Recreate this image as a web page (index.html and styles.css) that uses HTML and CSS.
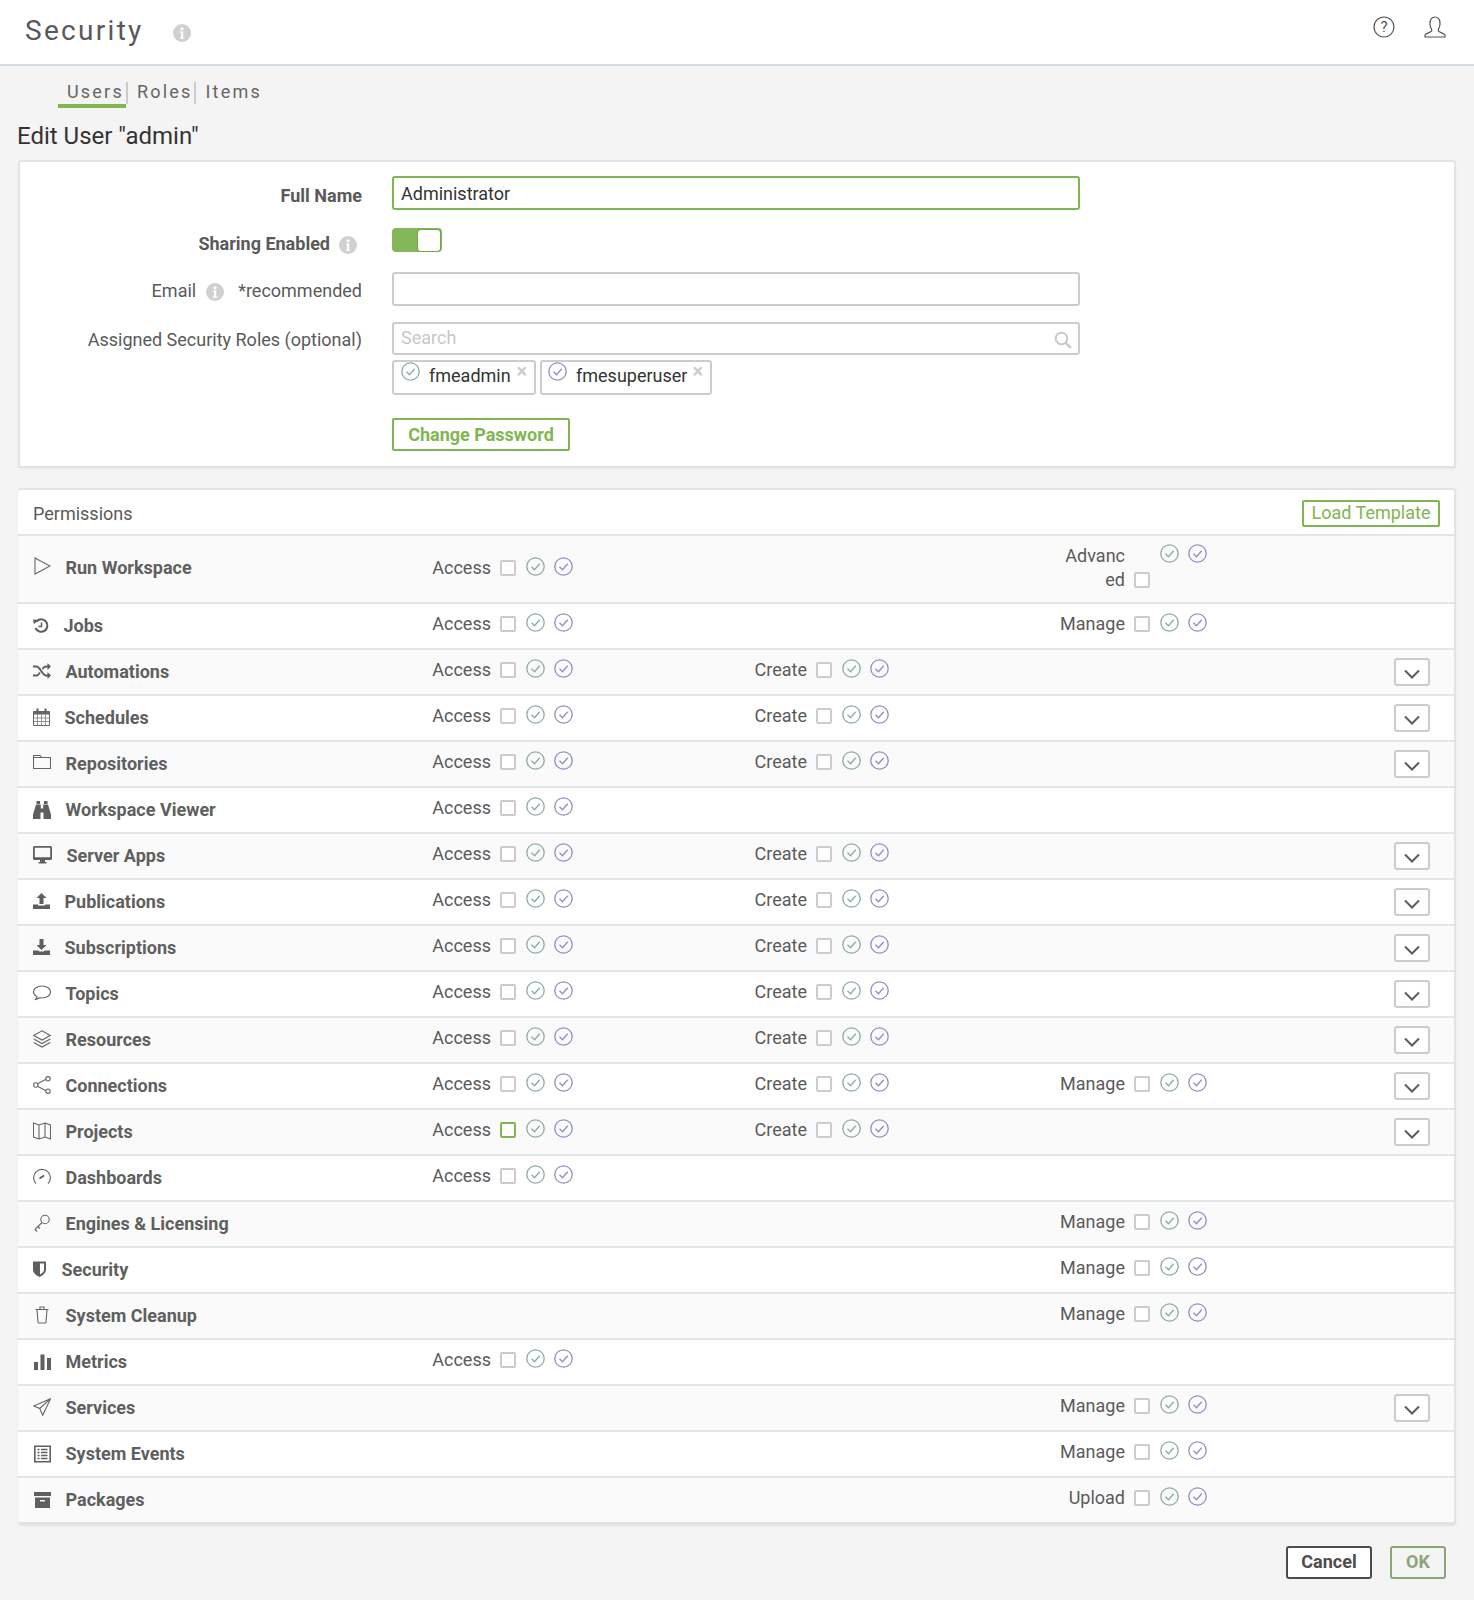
FILE: index.html
```html
<!DOCTYPE html>
<html lang="en">
<head>
<meta charset="utf-8">
<title>Security</title>
<link rel="stylesheet" href="styles.css">
</head>
<body>
<svg class="defs" width="0" height="0" aria-hidden="true">
  <symbol id="chk" viewBox="0 0 19 19"><circle cx="9.5" cy="9.5" r="8.7" fill="none" stroke="currentColor" stroke-width="1.3"/><path d="M5.5 9.8l3 3 5.2-6" fill="none" stroke="currentColor" stroke-width="1.3"/></symbol>
  <symbol id="info" viewBox="0 0 18 18"><circle cx="9" cy="9" r="9" fill="#d0d0d0"/><circle cx="9" cy="4.8" r="1.6" fill="#fff"/><path d="M6.8 7.4h3.4v6h1.2v1.4H6.8v-1.4H8V8.8H6.8z" fill="#fff"/></symbol>
  <symbol id="chev" viewBox="0 0 16 10"><path d="M1 1.5l7 7 7-7" fill="none" stroke="#5c5c5c" stroke-width="2"/></symbol>
</svg>

<header class="topbar">
  <div class="title-wrap">
    <h1 class="title">Security</h1>
    <svg class="info-top" width="18" height="18"><use href="#info"/></svg>
  </div>
  <div class="top-icons">
    <svg width="22" height="22" viewBox="0 0 22 22"><circle cx="11" cy="11" r="10" fill="none" stroke="#555" stroke-width="1.2"/><text x="11" y="16" text-anchor="middle" class="q">?</text></svg>
    <svg width="22" height="22" viewBox="0 0 22 22"><path d="M1 21h20v-1.8c0-1.6-5.6-2.6-6.6-4-.6-.9-.2-1.6.4-2.6.9-1.4 1.2-3 1.2-5C16 3.400 14 1 11 1S6 3.400 6 7.600c0 2 .3 3.600 1.200 5 .6 1 1 1.700.4 2.600-1 1.400-6.600 2.400-6.600 4z" fill="none" stroke="#555" stroke-width="1.200"/></svg>
  </div>
</header>

<nav class="tabs">
  <a class="tab tab-active">Users</a>
  <a class="tab">Roles</a>
  <a class="tab tab-last">Items</a>
</nav>

<h2 class="page-title">Edit User "admin"</h2>

<section class="card form">
  <div class="f-row f-r1">
    <label class="f-label strong">Full Name</label>
    <input class="inp inp-focus" type="text" value="Administrator">
  </div>
  <div class="f-row f-r2">
    <label class="f-label strong">Sharing Enabled<svg class="info-s" width="18" height="18"><use href="#info"/></svg></label>
    <div class="toggle"><span class="knob"></span></div>
  </div>
  <div class="f-row f-r3">
    <label class="f-label">Email<svg class="info-s info-e" width="18" height="18"><use href="#info"/></svg>*recommended</label>
    <input class="inp" type="text">
  </div>
  <div class="f-row f-r4">
    <label class="f-label">Assigned Security Roles (optional)</label>
    <div class="search">
      <span class="ph">Search</span>
      <svg width="18" height="18" viewBox="0 0 18 18"><circle cx="7.500" cy="7.500" r="5.800" fill="none" stroke="#c9c9c9" stroke-width="2"/><path d="M11.800 11.800l5 5" stroke="#c9c9c9" stroke-width="2.500"/></svg>
    </div>
  </div>
  <div class="chips">
    <span class="chip chip-a"><svg class="chip-i g"><use href="#chk"/></svg><span class="chip-t">fmeadmin</span><span class="chip-x">×</span></span>
    <span class="chip chip-b"><svg class="chip-i p"><use href="#chk"/></svg><span class="chip-t">fmesuperuser</span><span class="chip-x">×</span></span>
  </div>
  <button class="btn-pw" type="button">Change Password</button>
</section>

<section class="card perms">
  <div class="p-head"><span class="p-title">Permissions</span><button class="btn-load" type="button">Load Template</button></div>

  <div class="row row-first">
    <div class="name"><svg width="17" height="18" viewBox="0 0 17 18"><path d="M1 1l15 8-15 8z" fill="none" stroke="#666" stroke-width="1.100"/></svg><span>Run Workspace</span></div>
    <div class="perm"><span class="lab">Access</span><span class="box"></span><svg class="chk g"><use href="#chk"/></svg><svg class="chk p"><use href="#chk"/></svg></div>
    <div></div>
    <div class="perm perm-wrap"><span class="lab">Advanced</span><span class="box"></span><svg class="chk g"><use href="#chk"/></svg><svg class="chk p"><use href="#chk"/></svg></div>
  </div>

  <div class="row">
    <div class="name name-f"><svg width="16" height="18" viewBox="0 0 16 18"><path d="M3.500 4.500A6.200 6.200 0 1 1 2.500 11" fill="none" stroke="#5f5f5f" stroke-width="2"/><path d="M0 2.500l6 .5-5 4z" fill="#5f5f5f"/><path d="M8.500 5.500v4h-3" fill="none" stroke="#5f5f5f" stroke-width="1.500"/></svg><span>Jobs</span></div>
    <div class="perm"><span class="lab">Access</span><span class="box"></span><svg class="chk g"><use href="#chk"/></svg><svg class="chk p"><use href="#chk"/></svg></div>
    <div></div>
    <div class="perm"><span class="lab">Manage</span><span class="box"></span><svg class="chk g"><use href="#chk"/></svg><svg class="chk p"><use href="#chk"/></svg></div>
  </div>

  <div class="row">
    <div class="name"><svg width="18" height="18" viewBox="0 0 18 18"><path d="M0 4.500h3.500c3.500 0 6 9 9.500 9h2.500M0 13.500h3.500c1.500 0 2.500-1.500 3.500-3M9.500 7c1-1.500 2-2.500 3.500-2.500h2.500" fill="none" stroke="#5f5f5f" stroke-width="2"/><path d="M14.500 1l3.500 3.500-3.500 3.500zM14.500 10l3.500 3.500-3.500 3.500z" fill="#5f5f5f"/></svg><span>Automations</span></div>
    <div class="perm"><span class="lab">Access</span><span class="box"></span><svg class="chk g"><use href="#chk"/></svg><svg class="chk p"><use href="#chk"/></svg></div>
    <div class="perm"><span class="lab">Create</span><span class="box"></span><svg class="chk g"><use href="#chk"/></svg><svg class="chk p"><use href="#chk"/></svg></div>
    <div></div>
    <button class="more" type="button"><svg width="16" height="10"><use href="#chev"/></svg></button>
  </div>

  <div class="row">
    <div class="name"><svg width="17" height="18" viewBox="0 0 17 18"><path d="M.5 3.500h16v14H.5z" fill="none" stroke="#666"/><path d="M.5 3.500h16v3H.5z" fill="#666"/><path d="M.5 10h16M.5 13.500h16M4.500 6v11M8.500 6v11M12.500 6v11" stroke="#888" stroke-width=".9"/><path d="M4.500 .5v4M12.500 .5v4" stroke="#5f5f5f" stroke-width="2"/></svg><span>Schedules</span></div>
    <div class="perm"><span class="lab">Access</span><span class="box"></span><svg class="chk g"><use href="#chk"/></svg><svg class="chk p"><use href="#chk"/></svg></div>
    <div class="perm"><span class="lab">Create</span><span class="box"></span><svg class="chk g"><use href="#chk"/></svg><svg class="chk p"><use href="#chk"/></svg></div>
    <div></div>
    <button class="more" type="button"><svg width="16" height="10"><use href="#chev"/></svg></button>
  </div>

  <div class="row">
    <div class="name"><svg width="18" height="18" viewBox="0 0 18 18"><path d="M.5 1.500h6.500l1.500 2h9v11H.5z M.5 3.500H8.500" fill="none" stroke="#666" stroke-width="1.100"/></svg><span>Repositories</span></div>
    <div class="perm"><span class="lab">Access</span><span class="box"></span><svg class="chk g"><use href="#chk"/></svg><svg class="chk p"><use href="#chk"/></svg></div>
    <div class="perm"><span class="lab">Create</span><span class="box"></span><svg class="chk g"><use href="#chk"/></svg><svg class="chk p"><use href="#chk"/></svg></div>
    <div></div>
    <button class="more" type="button"><svg width="16" height="10"><use href="#chev"/></svg></button>
  </div>

  <div class="row">
    <div class="name name-f"><svg width="18" height="18" viewBox="0 0 18 18"><path d="M3.500 0h3.500v3H3.500zM11 0h3.500v3H11zM3 3.500h4.800v4h2.400v-4H15l3 10v4.500h-7.500v-6.500H7.500V18H0v-4.500z" fill="#5f5f5f"/></svg><span>Workspace Viewer</span></div>
    <div class="perm"><span class="lab">Access</span><span class="box"></span><svg class="chk g"><use href="#chk"/></svg><svg class="chk p"><use href="#chk"/></svg></div>
    <div></div>
    <div></div>
  </div>

  <div class="row">
    <div class="name"><svg width="19" height="18" viewBox="0 0 19 18"><path d="M1.500 0h16A1.500 1.500 0 0 1 19 1.500v11a1.500 1.500 0 0 1-1.500 1.500h-5.500v2h1.500v1.500h-8V16H7v-2H1.500A1.500 1.500 0 0 1 0 12.500v-11A1.500 1.500 0 0 1 1.500 0zM1.800 1.800v9.400h15.400V1.800z" fill="#5f5f5f" fill-rule="evenodd"/></svg><span>Server Apps</span></div>
    <div class="perm"><span class="lab">Access</span><span class="box"></span><svg class="chk g"><use href="#chk"/></svg><svg class="chk p"><use href="#chk"/></svg></div>
    <div class="perm"><span class="lab">Create</span><span class="box"></span><svg class="chk g"><use href="#chk"/></svg><svg class="chk p"><use href="#chk"/></svg></div>
    <div></div>
    <button class="more" type="button"><svg width="16" height="10"><use href="#chev"/></svg></button>
  </div>

  <div class="row">
    <div class="name"><svg width="17" height="18" viewBox="0 0 17 18"><path d="M8.500 1l5 5h-3v6h-4V6h-3z" fill="#5f5f5f"/><path d="M0 12.500h5v1h7v-1h5V17H0z" fill="#5f5f5f"/></svg><span>Publications</span></div>
    <div class="perm"><span class="lab">Access</span><span class="box"></span><svg class="chk g"><use href="#chk"/></svg><svg class="chk p"><use href="#chk"/></svg></div>
    <div class="perm"><span class="lab">Create</span><span class="box"></span><svg class="chk g"><use href="#chk"/></svg><svg class="chk p"><use href="#chk"/></svg></div>
    <div></div>
    <button class="more" type="button"><svg width="16" height="10"><use href="#chev"/></svg></button>
  </div>

  <div class="row">
    <div class="name"><svg width="17" height="18" viewBox="0 0 17 18"><path d="M6.500 1h4v6h3l-5 5-5-5h3z" fill="#5f5f5f"/><path d="M0 12.500h5l1.500 1h4l1.500-1h5V17H0z" fill="#5f5f5f"/></svg><span>Subscriptions</span></div>
    <div class="perm"><span class="lab">Access</span><span class="box"></span><svg class="chk g"><use href="#chk"/></svg><svg class="chk p"><use href="#chk"/></svg></div>
    <div class="perm"><span class="lab">Create</span><span class="box"></span><svg class="chk g"><use href="#chk"/></svg><svg class="chk p"><use href="#chk"/></svg></div>
    <div></div>
    <button class="more" type="button"><svg width="16" height="10"><use href="#chev"/></svg></button>
  </div>

  <div class="row">
    <div class="name"><svg width="18" height="18" viewBox="0 0 18 18"><path d="M9 2c4.700 0 8.500 2.500 8.500 6s-3.800 6-8.500 6c-1 0-1.800-.1-2.600-.3-1 .8-2.200 1.500-3.900 1.800.8-.8 1.300-1.700 1.500-2.800C1.800 11.600.5 10 .5 8 .5 4.500 4.300 2 9 2z" fill="none" stroke="#666" stroke-width="1.100"/></svg><span>Topics</span></div>
    <div class="perm"><span class="lab">Access</span><span class="box"></span><svg class="chk g"><use href="#chk"/></svg><svg class="chk p"><use href="#chk"/></svg></div>
    <div class="perm"><span class="lab">Create</span><span class="box"></span><svg class="chk g"><use href="#chk"/></svg><svg class="chk p"><use href="#chk"/></svg></div>
    <div></div>
    <button class="more" type="button"><svg width="16" height="10"><use href="#chev"/></svg></button>
  </div>

  <div class="row">
    <div class="name"><svg width="18" height="18" viewBox="0 0 18 18"><path d="M9 .8l8.300 4.600L9 10 .7 5.400z" fill="none" stroke="#666" stroke-width="1.100"/><path d="M.7 9L9 13.600 17.300 9M.7 12.400L9 17l8.300-4.600" fill="none" stroke="#666" stroke-width="1.100"/></svg><span>Resources</span></div>
    <div class="perm"><span class="lab">Access</span><span class="box"></span><svg class="chk g"><use href="#chk"/></svg><svg class="chk p"><use href="#chk"/></svg></div>
    <div class="perm"><span class="lab">Create</span><span class="box"></span><svg class="chk g"><use href="#chk"/></svg><svg class="chk p"><use href="#chk"/></svg></div>
    <div></div>
    <button class="more" type="button"><svg width="16" height="10"><use href="#chev"/></svg></button>
  </div>

  <div class="row">
    <div class="name"><svg width="18" height="18" viewBox="0 0 18 18"><path d="M4.500 7.800L13 3.200M4.500 10.200L13 14.800" stroke="#666" stroke-width="1.100"/><circle cx="2.800" cy="9" r="2.200" fill="none" stroke="#666" stroke-width="1.100"/><circle cx="15" cy="2.800" r="2.200" fill="none" stroke="#666" stroke-width="1.100"/><circle cx="15" cy="15.200" r="2.200" fill="none" stroke="#666" stroke-width="1.100"/></svg><span>Connections</span></div>
    <div class="perm"><span class="lab">Access</span><span class="box"></span><svg class="chk g"><use href="#chk"/></svg><svg class="chk p"><use href="#chk"/></svg></div>
    <div class="perm"><span class="lab">Create</span><span class="box"></span><svg class="chk g"><use href="#chk"/></svg><svg class="chk p"><use href="#chk"/></svg></div>
    <div class="perm"><span class="lab">Manage</span><span class="box"></span><svg class="chk g"><use href="#chk"/></svg><svg class="chk p"><use href="#chk"/></svg></div>
    <button class="more" type="button"><svg width="16" height="10"><use href="#chev"/></svg></button>
  </div>

  <div class="row">
    <div class="name"><svg width="18" height="18" viewBox="0 0 18 18"><path d="M.5 1l5.500 2 6-2 5.500 2v14l-5.500-2-6 2-5.500-2zM6 3v14M12 1v14" fill="none" stroke="#666" stroke-width="1.100"/></svg><span>Projects</span></div>
    <div class="perm"><span class="lab">Access</span><span class="box box-on"></span><svg class="chk g"><use href="#chk"/></svg><svg class="chk p"><use href="#chk"/></svg></div>
    <div class="perm"><span class="lab">Create</span><span class="box"></span><svg class="chk g"><use href="#chk"/></svg><svg class="chk p"><use href="#chk"/></svg></div>
    <div></div>
    <button class="more" type="button"><svg width="16" height="10"><use href="#chev"/></svg></button>
  </div>

  <div class="row">
    <div class="name"><svg width="18" height="18" viewBox="0 0 18 18"><path d="M3 15.700A8.400 8.400 0 1 1 15 15.700" fill="none" stroke="#666" stroke-width="1.200"/><path d="M6.500 10.500l4.500-3" stroke="#555" stroke-width="1.600"/></svg><span>Dashboards</span></div>
    <div class="perm"><span class="lab">Access</span><span class="box"></span><svg class="chk g"><use href="#chk"/></svg><svg class="chk p"><use href="#chk"/></svg></div>
    <div></div>
    <div></div>
  </div>

  <div class="row">
    <div class="name"><svg width="18" height="18" viewBox="0 0 18 18"><circle cx="12" cy="5.500" r="4.200" fill="none" stroke="#666" stroke-width="1.100"/><path d="M9 8.500l-7 7 2 2M5 12.500l2 2" fill="none" stroke="#666" stroke-width="1.100"/></svg><span>Engines &amp; Licensing</span></div>
    <div></div>
    <div></div>
    <div class="perm"><span class="lab">Manage</span><span class="box"></span><svg class="chk g"><use href="#chk"/></svg><svg class="chk p"><use href="#chk"/></svg></div>
  </div>

  <div class="row">
    <div class="name"><svg width="14" height="18" viewBox="0 0 14 18"><path d="M0 1.500h13v8c0 3.500-3 5.800-6.500 7.500C3 15.300 0 13 0 9.500z" fill="#5f5f5f"/><path d="M7 3.500h4v6c0 2.300-1.800 3.800-4 5z" fill="#fff"/></svg><span>Security</span></div>
    <div></div>
    <div></div>
    <div class="perm"><span class="lab">Manage</span><span class="box"></span><svg class="chk g"><use href="#chk"/></svg><svg class="chk p"><use href="#chk"/></svg></div>
  </div>

  <div class="row">
    <div class="name name-trash"><svg width="14" height="18" viewBox="0 0 14 18"><path d="M.5 3.500h13M2 3.500l1 12.500a1 1 0 0 0 1 1h6a1 1 0 0 0 1-1l1-12.500M5 3.500V1h4v2.500" fill="none" stroke="#666" stroke-width="1.100"/></svg><span>System Cleanup</span></div>
    <div></div>
    <div></div>
    <div class="perm"><span class="lab">Manage</span><span class="box"></span><svg class="chk g"><use href="#chk"/></svg><svg class="chk p"><use href="#chk"/></svg></div>
  </div>

  <div class="row">
    <div class="name name-f name-ind"><svg width="17" height="18" viewBox="0 0 17 18"><path d="M0 9h4v8H0zM6.500 1.500h4V17h-4zM13 5h4v12h-4z" fill="#5f5f5f"/></svg><span>Metrics</span></div>
    <div class="perm"><span class="lab">Access</span><span class="box"></span><svg class="chk g"><use href="#chk"/></svg><svg class="chk p"><use href="#chk"/></svg></div>
    <div></div>
    <div></div>
  </div>

  <div class="row">
    <div class="name"><svg width="18" height="18" viewBox="0 0 18 18"><path d="M17.500 .7L.7 8l6 2.500 3 6.800zM6.700 10.500L17.500 .7" fill="none" stroke="#666" stroke-width="1.100"/></svg><span>Services</span></div>
    <div></div>
    <div></div>
    <div class="perm"><span class="lab">Manage</span><span class="box"></span><svg class="chk g"><use href="#chk"/></svg><svg class="chk p"><use href="#chk"/></svg></div>
    <button class="more" type="button"><svg width="16" height="10"><use href="#chev"/></svg></button>
  </div>

  <div class="row">
    <div class="name name-f name-ind"><svg width="17" height="18" viewBox="0 0 17 18"><path d="M.8 1.300h15.400v15.400H.8z" fill="none" stroke="#5f5f5f" stroke-width="1.600"/><path d="M3.500 4.500h2M7 4.500h6.500M3.500 7.500h2M7 7.500h6.500M3.500 10.500h2M7 10.500h6.500M3.500 13.500h2M7 13.500h6.500" stroke="#5f5f5f" stroke-width="1.500"/></svg><span>System Events</span></div>
    <div></div>
    <div></div>
    <div class="perm"><span class="lab">Manage</span><span class="box"></span><svg class="chk g"><use href="#chk"/></svg><svg class="chk p"><use href="#chk"/></svg></div>
  </div>

  <div class="row">
    <div class="name name-f name-ind"><svg width="17" height="18" viewBox="0 0 17 18"><path d="M0 1h17v4H0zM1 6.500h15V17H1zM6 9v1.500h5V9z" fill="#5f5f5f" fill-rule="evenodd"/></svg><span>Packages</span></div>
    <div></div>
    <div></div>
    <div class="perm"><span class="lab">Upload</span><span class="box"></span><svg class="chk g"><use href="#chk"/></svg><svg class="chk p"><use href="#chk"/></svg></div>
  </div>
</section>

<footer class="actions">
  <button class="btn-cancel" type="button">Cancel</button>
  <button class="btn-ok" type="button">OK</button>
</footer>
</body>
</html>
```

FILE: styles.css
```css
* { box-sizing: border-box; }
html, body { margin: 0; padding: 0; }
body {
  background: #f4f4f4;
  color: #5a5a5a;
  font-family: Roboto, "Liberation Sans", sans-serif;
  font-size: 18px;
  height: 1600px;
  overflow: hidden;
}
button, input { font-family: inherit; }
.defs { position: absolute; }

.topbar {
  height: 66px;
  background: #fff;
  border-bottom: 2px solid #d3dce3;
  display: flex;
  justify-content: space-between;
  padding: 0 28px 0 25px;
}
.title-wrap { display: flex; align-items: center; }
.title {
  margin: 0 0 4px;
  font-size: 28px;
  font-weight: 400;
  letter-spacing: 2.3px;
  color: #595959;
}
.info-top { margin: 1px 0 0 29px; }
.top-icons { display: flex; gap: 29px; padding-top: 16px; }
.q { font: 400 15px Roboto, sans-serif; fill: #555; }

.tabs { display: flex; height: 42px; padding: 16px 0 0 58px; }
.tab {
  display: block;
  height: 22px;
  padding: 0 2px 0 9px;
  line-height: 19px;
  letter-spacing: 2.200px;
  color: #666;
  position: relative;
  border-right: 2px solid #ccc;
}
.tab-last { border-right: 0; }
.tab-active::after {
  content: "";
  position: absolute;
  left: 0;
  right: 0;
  top: 22px;
  height: 4px;
  background: #7fb651;
}

.page-title {
  margin: 0;
  height: 52px;
  padding: 12px 0 0 17px;
  font-size: 24px;
  line-height: 32px;
  font-weight: 400;
  color: #333;
}

.card {
  margin: 0 18px;
  background: #fff;
  border: 2px solid #e3e3e3;
  border-radius: 3px;
}
.form { height: 308px; padding: 14px 0 0; box-shadow: 0 1px 2px rgba(0,0,0,.05); }
.f-row { display: flex; gap: 30px; }
.f-r2 { margin-top: 18px; }
.f-r3 { margin-top: 16px; }
.f-r4 { margin-top: 16px; }
.f-label {
  width: 342px;
  text-align: right;
  line-height: 24px;
  padding-top: 8px;
  color: #5a5a5a;
}
.f-r2 .f-label { padding-top: 4px; }
.f-r3 .f-label { padding-top: 7px; }
.f-r4 .f-label { padding-top: 6px; }
.strong { font-weight: 700; }
.info-s { margin: 0 5px 0 9px; vertical-align: -4px; }
.info-e { margin: 0 14px 0 10px; }
.inp {
  width: 688px;
  height: 34px;
  border: 2px solid #ccc;
  border-radius: 3px;
  padding: 0 7px;
  font-size: 18px;
  color: #333;
  background: #fff;
  outline: 0;
}
.inp-focus { border-color: #7fb651; }
.toggle {
  width: 50px;
  height: 24px;
  background: #84b757;
  border-radius: 4px;
  padding: 2px 2px 1px 26px;
}
.knob {
  display: block;
  width: 22px;
  height: 21px;
  background: #fff;
  border-radius: 3px;
  box-shadow: 0 0 2px rgba(0,0,0,.35);
}
.search {
  width: 688px;
  height: 33px;
  border: 2px solid #ccc;
  border-radius: 3px;
  padding: 0 6px 0 7px;
  display: flex;
  align-items: center;
  justify-content: space-between;
}
.search svg { margin-top: 3px; }
.ph { color: #c8c8c8; margin-top: -2px; }
.chips { display: flex; gap: 4px; margin: 5px 0 0 372px; }
.chip {
  height: 35px;
  border: 2px solid #ccc;
  border-radius: 3px;
  display: flex;
  position: relative;
  padding-left: 7px;
  color: #333;
  background: #fff;
}
.chip-a { width: 144px; }
.chip-b { width: 172px; padding-left: 6px; }
.chip-i { width: 19px; height: 19px; margin-top: 0; }
.chip-t { margin-left: 9px; line-height: 28px; }
.chip-x {
  position: absolute;
  top: 0;
  right: 7px;
  font-size: 20px;
  line-height: 18px;
  font-weight: 700;
  color: #ccc;
}
.btn-pw {
  display: block;
  margin: 23px 0 0 372px;
  width: 178px;
  height: 33px;
  border: 2px solid #7fb651;
  border-radius: 2px;
  background: #fff;
  color: #7fb651;
  font-size: 18px;
  font-weight: 700;
  padding: 0;
}

.perms {
  margin-top: 20px;
  border-left: 0;
  border-bottom-width: 3px;
  box-shadow: 0 1px 2px rgba(0,0,0,.08);
}
.p-head {
  height: 46px;
  border-bottom: 2px solid #e1e6e9;
  display: flex;
  justify-content: space-between;
  align-items: center;
  padding: 0 14px 0 15px;
}
.p-title { margin-top: 2px; }
.btn-load {
  width: 138px;
  height: 27px;
  margin-top: 3px;
  padding: 0 0 7px;
  border: 2px solid #7fb651;
  border-radius: 2px;
  background: #fff;
  color: #7fb651;
  font-size: 18px;
}
.row {
  display: grid;
  grid-template-columns: 408px 316px 318px 1fr 36px;
  align-items: center;
  height: 46px;
  padding-right: 24px;
  border-bottom: 2px solid #e1e6e9;
  background: #fff;
}
.row:nth-child(even) { background: #fafafa; }
.row:last-child { border-bottom: 0; height: 44px; }
.row-first { height: 68px; }
.name {
  display: flex;
  align-items: center;
  gap: 14.5px;
  margin-top: -2px;
  padding-left: 15px;
  font-weight: 700;
  color: #5f5f5f;
}
.name svg { flex: none; margin-top: 0; }
.name-f svg { margin-top: 2px; }
.row-first .name { margin-top: -4px; }
.row-first .name svg { margin: -2px 0 0 1px; }
.name-trash svg { margin-left: 2px; margin-right: 2px; }
.name-ind svg { margin-left: 1px; }
.perm { display: flex; align-items: center; margin-top: -4px; }
.row-first .perm { margin-top: -2px; }
.lab { width: 65px; text-align: right; line-height: 24px; overflow-wrap: anywhere; }
.box {
  width: 16px;
  height: 16px;
  margin-left: 9px;
  border: 2px solid #ccc;
  border-radius: 2px;
  background: #fff;
  flex: none;
}
.box-on { border-color: #7fb651; }
.chk { width: 19px; height: 19px; margin-left: 10px; margin-top: -4px; flex: none; }
.chk + .chk { margin-left: 9px; }
.g { color: #8aae9c; }
.p { color: #8f8fc4; }
.row-first .perm-wrap { align-items: flex-start; margin-top: -2px; }
.perm-wrap .box { margin-top: 28px; }
.perm-wrap .chk { margin-top: 0; }
.more {
  width: 36px;
  height: 28px;
  border: 2px solid #ccc;
  border-radius: 3px;
  background: #fff;
  padding: 3px 0 0;
  grid-column: 5;
  grid-row: 1;
  display: flex;
  align-items: center;
  justify-content: center;
}

.actions {
  display: flex;
  justify-content: flex-end;
  gap: 18px;
  padding: 21px 28px 0 0;
}
.btn-cancel, .btn-ok {
  height: 33px;
  border-radius: 3px;
  font-size: 18px;
  font-weight: 700;
  padding: 0 0 3px;
}
.btn-cancel { width: 86px; border: 2px solid #4d4d4d; background: #fff; color: #4d4d4d; }
.btn-ok { width: 56px; border: 2px solid #8ba676; background: transparent; color: #8ba676; }
```
